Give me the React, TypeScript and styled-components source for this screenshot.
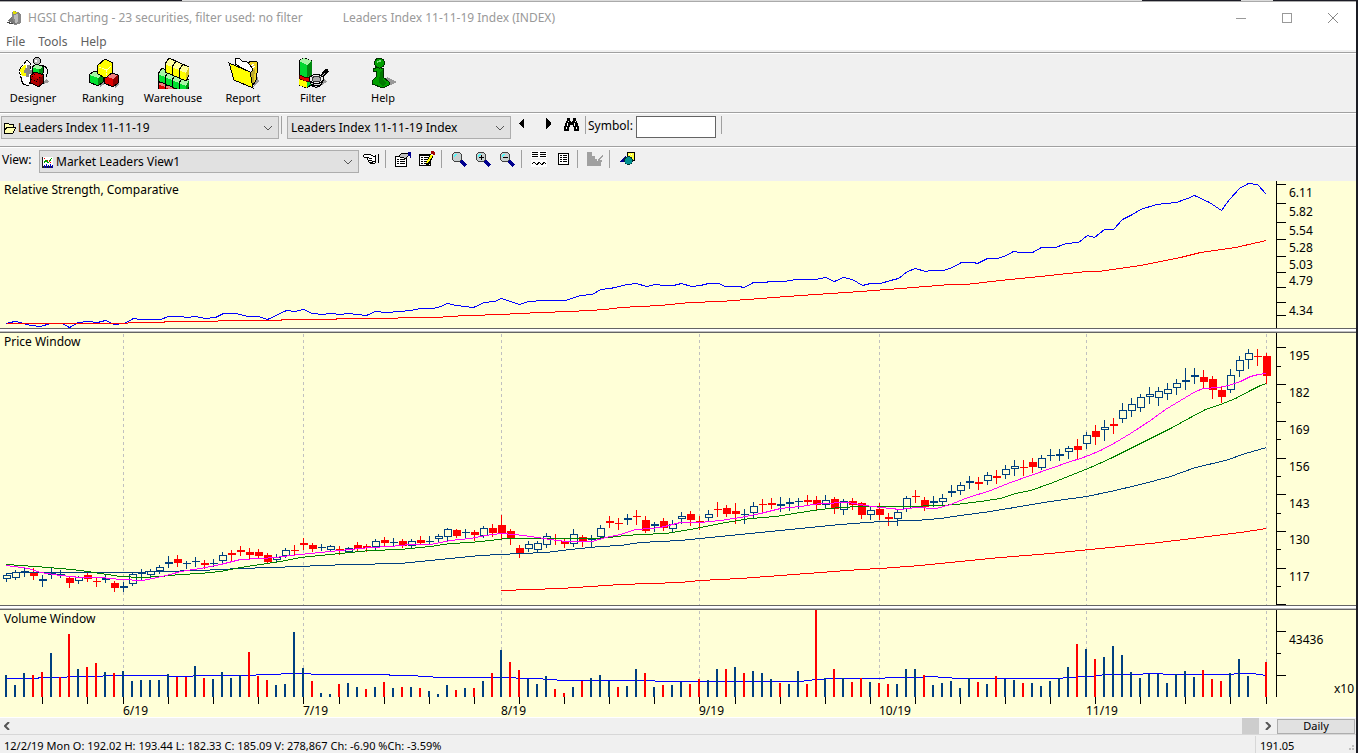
import React from 'react';
import styled, { createGlobalStyle } from 'styled-components';

const GlobalStyle = createGlobalStyle`
  * { box-sizing: border-box; }
  html, body, #root { height: 100%; }
  body { margin: 0; background: #1b1c24; font-family: 'Noto Sans', 'Open Sans', sans-serif; color: #000; }
  button, input, select { font: inherit; color: inherit; }
`;

/* ---------- data ---------- */

type Point = [number, number];

const STEP = 9;
const barX = (i: number) => 6 + i * STEP;

/* direction, high, body top, body bottom, low */
const CANDLES = `
b573,575,579,582 b570,572,578,580 b568,571,573,577 r568,572,576,580 b575,579,581,587 b568,573,575,579 b570,574,575,578
r577,578,583,588 b576,577,581,584 r573,575,579,582 r577,581,582,587 b575,578,580,583 r581,583,588,592 b582,586,588,592
b573,574,584,586 b569,572,574,580 b569,571,575,578 b565,567,571,574 b556,562,564,568 r555,559,563,567 b561,563,564,569
b557,561,562,567 r560,563,565,569 b559,563,564,567 b552,555,561,563 r550,553,555,561 r546,550,552,556 r548,552,555,560
r549,552,556,558 r553,555,562,563 b554,557,560,563 b548,550,556,558 r545,550,551,556 r538,543,545,550 r543,545,549,552
b544,547,548,551 b545,546,550,552 r546,549,550,555 b547,548,552,553 r542,545,549,551 r544,546,548,552 b539,541,547,550
r537,540,543,546 b538,542,543,547 r539,541,546,548 b539,541,546,549 r536,540,543,545 b536,541,542,545 b534,536,539,543
b528,529,537,541 r529,530,536,538 b529,532,533,538 r530,532,535,541 b526,528,536,538 r524,528,533,537 r515,525,534,539
r529,531,539,545 r545,548,553,558 b541,544,549,552 b541,543,550,553 b533,536,545,548 r534,538,539,545 r538,541,544,548
b529,534,544,547 r535,537,542,547 b535,539,540,547 b525,528,537,540 r516,521,523,528 r518,523,524,530 b514,518,520,525
r510,516,517,525 r516,520,531,533 b522,524,526,532 r518,521,528,531 b520,524,529,533 b512,516,519,524 r511,514,520,526
r516,521,522,530 b510,514,518,521 r502,509,510,517 r505,508,514,517 r503,511,514,524 b509,514,515,524 b502,506,513,519
r499,504,505,513 r498,503,505,509 b497,504,506,512 b498,502,504,511 b498,501,502,509 r495,500,502,506 r496,500,505,511
b495,500,505,508 r497,499,509,514 b499,501,510,515 r498,501,505,510 r502,503,515,519 b506,510,515,520 r503,509,515,520
r513,517,519,526 b510,512,519,526 b496,498,509,512 r490,496,497,503 r497,500,507,511 b496,501,503,507 b494,498,502,505
b485,491,493,497 b482,485,491,495 b476,481,483,489 r477,482,484,490 b472,475,481,485 r470,476,478,484 b465,469,475,479
b460,466,469,476 r460,467,468,476 r458,462,467,473 b455,458,468,470 b449,455,456,461 b449,454,456,461 b446,448,452,459
r439,446,450,459 b432,435,444,449 r425,431,437,445 b420,427,430,441 r418,424,426,434 b403,410,419,423 b398,404,411,417
b394,397,408,412 b387,394,397,404 b387,391,398,406 b383,389,394,400 b379,383,388,395 b368,380,382,390 b368,375,377,384
r370,377,382,389 r376,379,390,399 r387,390,397,403 b369,375,390,393 b356,360,371,377 b349,353,360,369 r349,356,357,366
r353,356,376,384`
  .trim()
  .split(/\s+/)
  .map((s) => ({ up: s[0] === 'b', v: s.slice(1).split(',').map(Number) }));

const VOLUMES = `
b675 b685 b673 r675 r672 b653 r677 r634 b669 r667 r663 b672 r673 b671 b681 b680 b680 b680 b674 r677 r677 b666 r678 b679
b672 b678 b675 r652 r676 r680 b685 b684 b632 b668 r681 b693 b694 r684 b683 b687 r689 b687 r682 b688 r687 b687 r688 b691
b694 b685 r690 b688 r688 b681 r673 b650 r662 r670 b679 b684 b676 r689 r693 b687 r681 b678 b675 b681 r687 b686 b669 r673
b687 r685 b685 b682 r684 r679 b680 b669 r669 b667 r673 b671 b673 b679 r683 b684 b671 r684 r610 b678 r669 b678 r682 r678
b682 r683 r684 b684 b669 b669 r675 b685 b683 b681 b688 b678 r682 b684 r676 b679 b680 r683 b683 b686 b681 b678 b667 r644
b649 r659 b657 b646 b655 b672 b678 b674 b674 b683 b674 b671 b677 r670 r679 r681 b673 b659 b676 b697 r662`
  .trim()
  .split(/\s+/)
  .map((s) => ({ up: s[0] === 'b', top: Number(s.slice(1)) }));

const series = (s: string): Point[] =>
  s.trim().split(/\s+/).map((p) => p.split(',').map(Number) as Point);

const RS_LINE = series(`6,323 14,321 20,322 30,325 40,326 50,323 62,323 69,327 78,322 88,321 97,322 105,320 114,324 124,323
133,318 140,319 160,319 168,316 180,316 187,317 195,316 205,318 215,317 223,313 235,313 248,316 258,316 267,319 286,310 294,311
303,309 312,313 322,314 330,313 340,314 348,313 366,315 375,311 385,312 400,311 410,310 420,308 433,308 440,306 447,303 456,305
473,307 484,302 494,301 501,298 519,304 528,301 543,300 565,300 580,295 592,294 600,289 610,288 627,284 636,283 646,286 655,284
664,285 673,285 681,283 691,286 700,285 708,283 718,283 725,286 738,286 744,287 753,282 766,282 768,281 784,281 795,279 815,279
825,277 834,281 843,277 852,279 862,285 870,283 880,283 890,280 898,278 907,271 915,268 925,271 930,270 943,270 952,267 961,262
973,262 977,263 987,258 997,258 1006,255 1013,251 1020,252 1032,252 1041,247 1055,247 1066,243 1078,242 1087,235 1094,237
1104,229 1113,229 1122,219 1132,214 1140,209 1156,204 1176,202 1187,198 1194,195 1209,202 1221,210 1229,199 1239,188 1248,183
1257,184 1266,194`);
const RS_AVG = series(`6,323 125,323 130,322 163,322 165,321 215,321 220,320 280,320 282,319 335,319 337,318 395,318 400,317
440,317 445,316 470,315 500,314 540,312 570,311 605,309 620,307 660,305 690,302 720,301 760,298 800,295 830,293 860,291 900,288
950,284 965,284 1000,280 1040,276 1086,271 1098,271 1140,265 1180,257 1200,252 1235,247 1266,240`);
const MA_FAST = series(`6,565 28,568 40,572 60,575 80,577 100,577 120,579 142,580 152,578 170,574 180,571 200,568 220,564
240,559 260,558 275,557 290,555 300,554 320,552 350,549 370,547 390,546 410,544 430,544 450,540 470,538 485,535 500,533 515,534
530,536 550,539 565,541 592,541 605,537 620,534 635,529 650,528 660,527 680,522 700,522 720,520 740,517 760,513 780,508 800,506
820,503 848,502 865,505 880,507 900,509 915,507 936,508 950,504 965,498 990,490 1010,482 1030,475 1050,468 1070,461 1080,458
1088,455 1100,450 1115,442 1130,433 1150,420 1165,409 1180,400 1195,391 1203,388 1218,387 1228,385 1240,381 1250,376 1258,374
1266,373`);
const MA_MID = series(`6,564 20,565 35,566 60,568 80,570 100,573 120,576 140,577 160,576 180,574 200,573 220,571 240,567 260,564
280,561 300,557 320,555 340,553 370,550 400,549 430,546 450,543 470,542 490,540 505,538 520,538 592,538 608,537 625,535 640,534
665,533 690,529 720,523 750,518 775,516 800,512 820,509 840,507 860,506 905,506 940,505 955,504 980,501 1000,498 1015,493
1030,490 1050,483 1075,473 1090,467 1110,458 1130,448 1150,438 1170,428 1190,417 1205,409 1220,404 1235,398 1250,390 1260,385
1266,383`);
const MA_SLOW = series(`6,573 20,572 130,572 160,571 200,570 240,568 270,567 300,566 320,565 350,564 400,563 430,560 460,557
480,555 500,554 520,553 545,552 570,549 600,546 620,545 640,542 680,540 700,538 720,536 760,532 800,528 840,524 880,521 915,520
940,518 960,515 990,511 1020,506 1050,501 1086,496 1110,491 1140,484 1170,476 1195,467 1225,460 1245,453 1266,447`);
const MA_LONG = series(`501,590 530,589 560,588 590,586 620,584 650,583 680,582 700,580 740,578 780,575 820,572 860,569 880,568
920,565 950,562 1000,557 1050,553 1100,548 1150,543 1200,537 1240,532 1266,528`);
const VOL_AVG = series(`6,678 36,678 40,677 65,677 68,676 100,676 105,675 165,675 172,676 190,676 195,675 250,675 262,674 300,673
320,674 388,674 390,675 415,675 420,676 445,677 510,677 520,678 540,678 545,679 568,680 640,680 668,681 800,681 815,679 832,678
880,678 890,677 920,677 930,676 945,677 958,678 1060,678 1065,677 1090,676 1105,674 1140,674 1145,673 1160,673 1165,674 1228,674
1240,673 1252,673 1266,675`);

const MONTHS = [
  { x: 123, label: '6/19' }, { x: 303, label: '7/19' }, { x: 501, label: '8/19' }, { x: 699, label: '9/19' },
  { x: 879, label: '10/19' }, { x: 1086, label: '11/19' }, { x: 1266, label: '' },
];
const WEEK_TICKS = [42, 87, 123, 168, 213, 258, 303, 339, 384, 429, 474, 519, 564, 609, 654, 699, 735, 780, 825, 870, 915, 960,
  1005, 1050, 1095, 1140, 1185, 1230, 1266];

const NAVY = '#004080';
const RED = '#ff0000';
const PLOT_W = 1276;

/* ---------- window frame ---------- */

const Window = styled.div`
  display: flex; flex-direction: column; min-height: 100vh; min-width: 900px;
  border-right: 2px solid #1b1c24; background: #f0f0f0;
`;
const Desktop = styled.div`
  flex: none; height: 2px; border-bottom: 1px solid #aaa;
  background: linear-gradient(90deg, #1c1c26 182px, #dcdcdc 182px, #dcdcdc calc(100% - 214px), #1c1c26 calc(100% - 214px),
    #1c1c26 calc(100% - 115px), #dcdcdc calc(100% - 115px), #dcdcdc calc(100% - 83px), #1c1c26 calc(100% - 83px));
`;
const TitleBar = styled.header`
  display: flex; align-items: center; height: 31px; padding: 0 15px 0 7px; background: #fff;
  font-size: 12px; color: #999; white-space: pre;
`;
const Title = styled.h1`
  margin: 0 40px 0 5px; font-size: 12px; font-weight: 400; line-height: 16px;
`;
const Spacer = styled.div`flex: 1;`;
const CaptionButton = styled.button`
  width: 16px; height: 16px; padding: 0; margin-left: 30px; border: 0; background: none; color: #999;
  svg { display: block; }
`;
const MenuBar = styled.nav`
  display: flex; gap: 13px; height: 19px; padding: 0 6px; background: #fff; border-bottom: 2px solid #f0f0f0;
  font-size: 12px; line-height: 17px;
`;
const MenuItem = styled.button`
  padding: 0; border: 0; background: none; color: #606060; font-size: 12px;
`;
const Bar = styled.div<{ $h: number }>`
  display: flex; height: ${(p) => p.$h}px; border-top: 1px solid #a0a0a0; box-shadow: inset 0 1px #fff;
  font-size: 12px;
`;
const MainBar = styled(Bar)`gap: 4px; padding-top: 4px;`;
const MainButton = styled.button`
  display: flex; flex-direction: column; align-items: center; width: 66px; padding: 0; border: 0; background: none;
  font-size: 11px; line-height: 16px;
  svg { display: block; flex: none; margin-bottom: 1px; }
`;
const ComboRow = styled(Bar)`align-items: flex-start; padding: 3px 0 0 1px;`;
const Combo = styled.label<{ $w: number; $pad?: number }>`
  display: flex; align-items: center; width: ${(p) => p.$w}px; height: 23px; padding: 0 5px 0 ${(p) => p.$pad ?? 0}px;
  border: 1px solid #adadad; background: #e1e1e1; color: #555;
`;
const ComboSelect = styled.select`
  flex: 1; min-width: 0; height: 21px; padding: 0; border: 0; outline: 0; background: transparent;
  appearance: none; color: #000; font-size: 12px;
`;
const Separator = styled.i<{ $before?: number; $after?: number }>`
  width: 1px; height: 18px; margin: 0 ${(p) => p.$after ?? 9}px 0 ${(p) => p.$before ?? 6}px; background: #a0a0a0;
`;
const ToolButton = styled.button<{ $before?: number; $gap?: number }>`
  width: 16px; height: 16px; margin: 1px ${(p) => p.$gap ?? 0}px 0 ${(p) => p.$before ?? 0}px; padding: 0; border: 0; background: none;
  svg { display: block; }
`;
const FieldLabel = styled.label`
  width: 48px; line-height: 20px; white-space: nowrap;
`;
const ViewLabel = styled(FieldLabel)`width: 38px; padding-left: 1px;`;
const SymbolInput = styled.input`
  width: 80px; height: 22px; padding: 2px 4px; border: 1px solid #646464; background: #fff; outline: 0;
`;

/* ---------- chart panels ---------- */

const Charts = styled.main`flex: 1; display: flex; flex-direction: column; background: #ffffd7;`;
const Panel = styled.section<{ $h: number }>`
  position: relative; display: flex; flex: ${(p) => p.$h} 0 ${(p) => p.$h}px; background: #ffffd7; font-size: 12px;
`;
const Divider = styled.div`
  flex: none; height: 5px; border-top: 1px solid #646464; border-bottom: 1px solid #646464;
  background: linear-gradient(#fff 2px, #c0c0c0 2px);
`;
const PanelTitle = styled.h2`
  position: absolute; left: 4px; top: 0; margin: 0; font-size: 12px; font-weight: 400; line-height: 18px;
`;
const Plot = styled.svg`
  flex: 1; min-width: 0; display: block; height: 100%;
`;
const Axis = styled.svg`
  flex: none; width: 80px; display: block; height: 100%; overflow: visible;
`;
const UnitLabel = styled.span`
  position: absolute; right: 2px; bottom: 7px; line-height: 16px;
`;
const DateRow = styled.div`
  position: relative; flex: none; height: 13px; margin-right: 80px; font-size: 12px; line-height: 14px;
`;
const DateLabel = styled.span`position: absolute; top: 0;`;

const ScrollRow = styled.div`
  display: flex; align-items: center; flex: none; height: 17px; padding-right: 1px; border-top: 1px solid #fff; background: #f0f0f0;
`;
const ScrollButton = styled.button<{ $w: number }>`
  width: ${(p) => p.$w}px; height: 16px; padding: 0; border: 0; background: none; color: #555;
  svg { display: block; margin: 0 auto; }
`;
const ScrollTrack = styled.div`flex: 1; display: flex; justify-content: flex-end; height: 16px;`;
const ScrollThumb = styled.div`width: 17px; background: #cdcdcd;`;
const PeriodButton = styled.button`
  width: 78px; height: 15px; padding: 0; margin-left: 1px; border: 1px solid #adadad; background: #e1e1e1;
  font-size: 11px; line-height: 12px;
`;
const StatusBar = styled.footer`
  display: flex; align-items: stretch; flex: none; height: 19px; border-top: 1px solid #d7d7d7; background: #f0f0f0;
  font-size: 11px; line-height: 15px;
`;
const StatusText = styled.div`flex: 1; padding: 3px 0 0 4px; white-space: nowrap;`;
const StatusValue = styled.div`
  width: 93px; margin-top: 1px; padding: 2px 0 0 4px; border-left: 1px solid #d7d7d7;
`;
const Grip = styled.svg`align-self: flex-end; width: 8px; height: 8px;`;

/* ---------- icons ---------- */

const Pix = ({ size = 16, children }: { size?: number; children: React.ReactNode }) => (
  <svg width={size} height={size} viewBox={`0 0 ${size} ${size}`} shapeRendering="crispEdges" aria-hidden="true">{children}</svg>
);

interface Shades { top: string; front: string; side: string }
const GREEN: Shades = { top: '#a6f5a6', front: '#00e030', side: '#008a10' };
const REDC: Shades = { top: '#f08080', front: '#e00000', side: '#900000' };
const YELLOW: Shades = { top: '#ffff9a', front: '#ffff00', side: '#d8c820' };

/* An isometric block: lit top, front face and shaded side. */
const Cube = ({ x, y, s = 1, top, front, side }: { x: number; y: number; s?: number } & Shades) => (
  <g transform={`translate(${x} ${y}) scale(${s})`} stroke="#000" strokeWidth={1 / s} strokeLinejoin="round">
    <path d="M0 4L5 0L14 3L14 11L9 15L0 11Z" fill={front} />
    <path d="M0 4L5 0L14 3L9 7Z" fill={top} stroke="none" />
    <path d="M9 7L14 3V11L9 15Z" fill={side} stroke="none" />
    <path d="M0 4L5 0L14 3L14 11L9 15L0 11Z" fill="none" />
  </g>
);

/* A run of joined blocks that recedes to the lower right. */
const BlockRow = ({ x, y, n, h, top, front, side }: { x: number; y: number; n: number; h: number } & Shades) => {
  const ex = x + n * 7;
  const ey = y + n * 3;
  return (
    <g>
      <path d={`M${x} ${y}L${x + 4} ${y - 6}L${ex + 3} ${ey - 6}V${ey - 6 + h}L${ex} ${ey + h}L${x} ${y + h}Z`} fill={front} stroke="#000" />
      <path d={`M${x} ${y}L${x + 4} ${y - 6}L${ex + 3} ${ey - 6}L${ex} ${ey}Z`} fill={top} />
      <path d={`M${ex} ${ey}L${ex + 3} ${ey - 6}V${ey - 6 + h}L${ex} ${ey + h}Z`} fill={side} />
      {Array.from({ length: n - 1 }, (_, i) => (
        <path key={i} d={`M${x + 4 + (i + 1) * 7} ${y - 6 + (i + 1) * 3}L${x + (i + 1) * 7} ${y + (i + 1) * 3}V${y + h + (i + 1) * 3}`}
          fill="none" stroke="#000" />
      ))}
      <path d={`M${x} ${y}L${x + 4} ${y - 6}L${ex + 3} ${ey - 6}V${ey - 6 + h}L${ex} ${ey + h}L${x} ${y + h}Z`} fill="none" stroke="#000" />
    </g>
  );
};

const DesignerIcon = () => (
  <Pix size={32}>
    <g transform="translate(1 0)">
      <path d="M20 29L31 25L29 22Z" fill="#999" />
      <path d="M23 9C29 8 31 13 28 20" fill="none" stroke="#000" />
      <Cube x={14} y={7} s={0.8} {...GREEN} />
      <circle cx="19" cy="4" r="3.5" fill="#b8b8b8" stroke="#000" />
      <path d="M17 3h2v2h-2z" fill="#fff" />
      <path d="M1 13L9 3L12 6L14 22L10 29L5 27L3 21Z" fill="#fff" stroke="#000" strokeDasharray="3 1" />
      <path d="M2 13L7 7L9 12L8 19L4 19Z" fill="#ffff00" />
      <path d="M7 11h2v-3h3v5h2v4h-3v3h-3v-4h-2z" fill="#888" />
      <path d="M4 20C2 25 5 28 11 29" fill="none" stroke="#000" />
      <Cube x={12} y={15} s={0.98} top="#d00000" front="#b00000" side="#800000" />
      <path d="M14 19L20 23M16 17L22 21M13 22L19 25" stroke="#000" strokeDasharray="1 2" />
    </g>
  </Pix>
);
const RankingIcon = () => (
  <Pix size={32}>
    <g transform="translate(1 0)">
      <path d="M12 30L18 26L14 24ZM27 31L31 27L29 25Z" fill="#999" />
      <Cube x={1} y={14} {...GREEN} />
      <Cube x={16} y={15} {...REDC} />
      <path d="M9 9L17 2L25 6L24 16L17 21L10 17Z" fill="#ffff00" stroke="#000" />
      <path d="M11 10L19 13L24 8M19 13L18 20" stroke="#ffffc0" strokeDasharray="2 1" fill="none" />
    </g>
  </Pix>
);
const WarehouseIcon = () => (
  <Pix size={32}>
    <BlockRow x={1} y={27} n={2} h={7} {...REDC} />
    <BlockRow x={1} y={17} n={4} h={7} {...GREEN} />
    <BlockRow x={8} y={7} n={3} h={8} {...YELLOW} />
  </Pix>
);
const ReportIcon = () => (
  <Pix size={32}>
    <g transform="translate(1 0)">
      <path d="M25 31L31 24L29 19Z" fill="#999" />
      <path d="M20 6L23 4L29 5L30 9L28 23L24 30L17 10Z" fill="#f0d820" stroke="#000" />
      <path d="M7 7L8 1L12 2L14 4L18 4L22 8L25 12L23 16Z" fill="#fff" stroke="#000" />
      <path d="M1 6L22 15L25 31L6 23Z" fill="#ffff00" stroke="#000" />
      <path d="M23 15L27 11L26 24L25 29Z" fill="#b8a830" />
      <path d="M23 12L27 9M23 9L26 7" stroke="#fff" />
    </g>
  </Pix>
);
const FilterIcon = () => (
  <Pix size={32}>
    <path d="M20 31L30 25L26 20Z" fill="#999" />
    <path d="M2 4L7 1L15 4L14 28L10 31L2 28Z" fill="#00d830" stroke="#000" />
    <path d="M2 4L7 1L15 4L10 8Z" fill="#a6f5a6" />
    <path d="M10 8L15 4V18L10 20Z" fill="#008a10" />
    <path d="M2 18L10 21L15 19V23L10 25L2 22Z" fill="#e00000" stroke="#400" />
    <path d="M2 22L10 25V31L2 28Z" fill="#ffff00" />
    <path d="M24 20L27 17" stroke="#000" strokeWidth="3" />
    <path d="M26 17L31 13" stroke="#000" strokeWidth="4" />
    <path d="M24 20L28 16" stroke="#bbb" />
    <path d="M13 23C14 33 24 32 26 23" fill="#ddd" stroke="#000" />
    <ellipse cx="19.500" cy="22" rx="7" ry="4.500" fill="#eee" stroke="#000" />
    <ellipse cx="19.500" cy="22" rx="4.500" ry="2.500" fill="#aaa" stroke="#333" />
    <path d="M15 27C18 30 23 29 25 26" fill="none" stroke="#000" />
  </Pix>
);
const HelpIcon = () => (
  <Pix size={32}>
    <path d="M17 31L30 25L20 20L18 26Z" fill="#999" />
    <path d="M6 12L11 10L17 12L16 20L22 25V28L16 31L5 27V24L9 20V14H6Z" fill="#00a000" stroke="#003000" />
    <path d="M13 15L16 13V23L20 26L16 29L12 26Z" fill="#007800" />
    <circle cx="12.500" cy="6" r="5" fill="#00a000" stroke="#003000" />
    <path d="M10 4h2v-1h2v2h-3v1h-1z" fill="#80e080" />
  </Pix>
);
const AppIcon = () => (
  <Pix>
    <path d="M5 3L6 1L11 2L14 5V13L8 15L5 13Z" fill="#888" />
    <path d="M6 1L10 2L9 4L6 4Z" fill="#e0e000" />
    <path d="M7 5L11 4V12L8 13Z" fill="#bbb" />
    <path d="M2 9L5 7L6 11L9 13L8 14L1 11Z" fill="#777" />
    <path d="M0 12h3v1h3v1H2v-1H0z" fill="#444" />
  </Pix>
);
const Chevron = () => (
  <svg width="10" height="6" viewBox="0 0 10 6" aria-hidden="true"><path d="M1 1L5 5L9 1" fill="none" stroke="currentColor" /></svg>
);
const FolderIcon = () => (
  <Pix>
    <path d="M2 12V4L3 3H6L7 4H11V7H14L11 13H2Z" fill="#ffffb0" stroke="#000" />
    <path d="M2 12L5 7H14" fill="none" stroke="#000" />
  </Pix>
);
const ChartIcon = () => (
  <Pix>
    <rect x="2" y="3" width="11" height="11" fill="#fff" />
    <path d="M2 3h1v11H2zM3 12h10v2H3z" fill="#202020" />
    <path d="M4 9L6 6L8 9L12 4" stroke="#00a000" fill="none" />
    <path d="M4 4L8 7L12 9" stroke="#f00" fill="none" strokeDasharray="2 1" />
    <path d="M4 11h1v3H4zM6 10h1v4H6zM8 11h1v3H8zM10 10h1v4h-1zM12 11h1v3h-1z" fill="#0000c0" />
  </Pix>
);
const HandIcon = () => (
  <Pix>
    <path d="M1 4H8L10 3L13 5V11L10 12H7L6 10H4L3 8H5V6H1Z" fill="#fff" />
    <path d="M1 3h7v1H1zM0 4h1v2H0zM1 6h5v1H1zM4 7h1v2H4zM5 9h4v1H5zM5 10h1v1H5zM6 11h4v1H6zM8 4h2v1H8zM10 5h2v1h-2zM6 7h3v1H6zM9 10h3v1H9z" />
    <path d="M12 4h1v8h-1zM15 3h1v9h-1zM7 12h5v1H7z" />
  </Pix>
);
const PropsIcon = () => (
  <Pix>
    <path d="M0 5H12V16H0Z" />
    <path d="M1 6H11V15H1Z" fill="#fff" />
    <path d="M2 8h2v1H2zM5 8h5v1H5zM2 10h2v1H2zM5 10h5v1H5zM2 12h2v1H2zM5 12h5v1H5z" />
    <path d="M4 5L7 2H12L14 4L10 8L8 6H5Z" fill="#c0c0c0" stroke="#000" />
    <path d="M13 1h3v6h-1v-2h-2z" fill="#000090" />
  </Pix>
);
const EditIcon = () => (
  <Pix>
    <path d="M0 3H12V15H0Z" />
    <path d="M1 5H11V14H1Z" fill="#fff" />
    <path d="M2 6h2v1H2zM5 6h4v1H5zM2 8h2v1H2zM5 8h4v1H5zM2 10h2v1H2zM5 10h4v1H5zM2 12h2v1H2zM5 12h4v1H5z" />
    <path d="M8 13L13 4" stroke="#000" strokeWidth="4" />
    <path d="M8 12L13 4" stroke="#ffff00" strokeWidth="2" />
    <path d="M12 0h3v1h1v3h-2v-1h-2z" fill="#a00000" />
    <path d="M7 12h2v2H7z" />
  </Pix>
);
const ZoomIcon = ({ sign }: { sign?: '+' | '-' }) => (
  <Pix>
    <path d="M10 10L15 15" stroke="#000090" strokeWidth="3" />
    <circle cx="6" cy="6" r="5" fill="#c8d0d0" stroke="#404040" />
    <path d="M3 4h1v-1h2v1h-1v1h-1v1h-1z" fill="#40ffff" />
    {sign && <path d="M4 6h5v1H4z" />}
    {sign === '+' && <path d="M6 4h1v5H6z" />}
  </Pix>
);
const WavesIcon = () => (
  <Pix>
    <rect width="16" height="16" fill="#fff" />
    <path d="M1 1h6v1H1zM9 1h6v1H9zM1 3h6v1H1zM9 3h6v1H9zM1 5h6v1H1zM9 5h6v1H9z" />
    <rect y="7" width="16" height="2" fill="#f0f0f0" />
    <path d="M1 13L3 11L6 14L8 11L11 14L13 11L15 13" fill="none" stroke="#000" />
  </Pix>
);
const ListIcon = () => (
  <Pix>
    <rect x="3.500" y="2.500" width="10" height="11" fill="#fff" stroke="#000" />
    <path d="M5 4h2v1H5zM8 4h4v1H8zM5 6h2v1H5zM8 6h4v1H8zM5 8h2v1H5zM8 8h4v1H8zM5 10h2v1H5zM8 10h4v1H8z" />
  </Pix>
);
const StepIcon = () => (
  <Pix><path d="M0 1h5v4h3v3h2v2h1v-2h1v-1h1v-1h1v-1h1v-1h1v2h-1v1h-1v1h-1v1h2v2h-1v4H0z" fill="#a0a0a0" /></Pix>
);
const ShapesIcon = () => (
  <Pix>
    <path d="M8 1H15V9H8Z" fill="#ffff40" stroke="#000" />
    <path d="M0 11L7 4V11Z" fill="#000090" />
    <circle cx="9.500" cy="9.500" r="4" fill="#009090" stroke="#003030" />
    <path d="M10 3h1v1h-1zM12 3h1v1h-1z" fill="#fff" />
  </Pix>
);
const BinocularsIcon = () => (
  <Pix>
    <path d="M4 1h3v3h1v1h1v-1h1v-3h3v3h1v2h1v3h1v5h-5v-4h-1v-2h-3v2h-1v4H1v-5h1v-3h1v-2h1z" />
    <path d="M5 4h1v1H5zM4 6h1v3H4zM12 4h1v1h-1zM11 6h1v3h-1zM3 10h1v2H3zM13 10h1v2h-1z" fill="#fff" />
  </Pix>
);
const ArrowIcon = ({ right }: { right?: boolean }) => (
  <Pix><path d={right ? 'M7 1V12L12 7V6Z' : 'M13 1V12L8 7V6Z'} /></Pix>
);

/* ---------- chart parts ---------- */

const Line = ({ points, color }: { points: Point[]; color: string }) => (
  <polyline points={points.map(([x, y]) => `${x + 0.5},${y + 0.5}`).join(' ')} fill="none" stroke={color} />
);
const MonthLines = ({ top, bottom }: { top: number; bottom: number }) => (
  <g stroke="#c0c0c0" strokeDasharray="3 3">
    {MONTHS.map((m) => <path key={m.x} d={`M${m.x + 0.5} ${top}V${bottom}`} />)}
  </g>
);
const PlotArea = ({ top, height, label, children }: { top: number; height: number; label: string; children: React.ReactNode }) => (
  <Plot viewBox={`0 ${top} ${PLOT_W} ${height}`} preserveAspectRatio="none" shapeRendering="crispEdges" role="img" aria-label={label}>
    {children}
  </Plot>
);
interface AxisProps { top: number; height: number; end?: number; major: number[]; minor?: number[]; labels: [number, string][] }
const ValueAxis = ({ top, height, end, major, minor = [], labels }: AxisProps) => (
  <Axis viewBox={`0 ${top} 80 ${height}`} shapeRendering="crispEdges" fontSize="12">
    <rect x="0" y={top} width="1" height={(end ?? top + height) - top} />
    {major.map((y) => <rect key={y} x="1" y={y} width="9" height="1" />)}
    {minor.map((y) => <rect key={y} x="1" y={y} width="4" height="1" />)}
    {labels.map(([y, t]) => <text key={t} x="13" y={y + 5}>{t}</text>)}
  </Axis>
);

export default function App() {
  return (
    <>
      <GlobalStyle />
      <Window>
        <Desktop />
        <TitleBar>
          <AppIcon />
          <Title>HGSI Charting - 23 securities, filter used: no filter</Title>
          <span>Leaders Index 11-11-19 Index (INDEX)</span>
          <Spacer />
          <CaptionButton aria-label="Minimize"><Pix><path d="M3 8h10v1H3z" fill="#999" /></Pix></CaptionButton>
          <CaptionButton aria-label="Maximize"><Pix><path d="M3.500 3.500h9v9h-9z" fill="none" stroke="#999" /></Pix></CaptionButton>
          <CaptionButton aria-label="Close">
            <svg width="16" height="16" viewBox="0 0 16 16"><path d="M3 3L13 13M13 3L3 13" stroke="#888" /></svg>
          </CaptionButton>
        </TitleBar>
        <MenuBar>
          <MenuItem>File</MenuItem><MenuItem>Tools</MenuItem><MenuItem>Help</MenuItem>
        </MenuBar>

        <MainBar $h={60}>
          <MainButton><DesignerIcon />Designer</MainButton>
          <MainButton><RankingIcon />Ranking</MainButton>
          <MainButton><WarehouseIcon />Warehouse</MainButton>
          <MainButton><ReportIcon />Report</MainButton>
          <MainButton><FilterIcon />Filter</MainButton>
          <MainButton><HelpIcon />Help</MainButton>
        </MainBar>

        <ComboRow $h={34}>
          <Combo $w={278}>
            <FolderIcon />
            <ComboSelect aria-label="Group"><option>Leaders Index 11-11-19</option></ComboSelect>
            <Chevron />
          </Combo>
          <Separator $before={2} $after={5} />
          <Combo $w={224} $pad={3}>
            <ComboSelect aria-label="Security"><option>Leaders Index 11-11-19 Index</option></ComboSelect>
            <Chevron />
          </Combo>
          <ToolButton $gap={12} aria-label="Previous"><ArrowIcon /></ToolButton>
          <ToolButton $gap={8} aria-label="Next"><ArrowIcon right /></ToolButton>
          <ToolButton aria-label="Find"><BinocularsIcon /></ToolButton>
          <Separator $after={2} />
          <FieldLabel htmlFor="symbol">Symbol:</FieldLabel>
          <SymbolInput id="symbol" />
          <Separator $before={5} />
        </ComboRow>

        <ComboRow $h={35}>
          <ViewLabel htmlFor="view">View:</ViewLabel>
          <Combo $w={320}>
            <ChartIcon />
            <ComboSelect id="view"><option>Market Leaders View1</option></ComboSelect>
            <Chevron />
          </Combo>
          <ToolButton $before={4} aria-label="Point"><HandIcon /></ToolButton>
          <Separator />
          <ToolButton $gap={8} aria-label="Properties"><PropsIcon /></ToolButton>
          <ToolButton aria-label="Edit"><EditIcon /></ToolButton>
          <Separator />
          <ToolButton $gap={8} aria-label="Zoom"><ZoomIcon /></ToolButton>
          <ToolButton $gap={8} aria-label="Zoom in"><ZoomIcon sign="+" /></ToolButton>
          <ToolButton aria-label="Zoom out"><ZoomIcon sign="-" /></ToolButton>
          <Separator />
          <ToolButton $gap={8} aria-label="Split"><WavesIcon /></ToolButton>
          <ToolButton aria-label="List"><ListIcon /></ToolButton>
          <Separator />
          <ToolButton aria-label="Step"><StepIcon /></ToolButton>
          <Separator />
          <ToolButton aria-label="Shapes"><ShapesIcon /></ToolButton>
        </ComboRow>

        <Charts>
          <Panel $h={147}>
            <PanelTitle>Relative Strength, Comparative</PanelTitle>
            <PlotArea top={181} height={147} label="Relative strength">
              <Line points={RS_LINE} color="#0000ff" />
              <Line points={RS_AVG} color={RED} />
            </PlotArea>
            <ValueAxis top={181} height={147} major={[184, 203, 222, 239, 256, 272, 287, 302, 315]}
              labels={[[192, '6.11'], [211, '5.82'], [230, '5.54'], [247, '5.28'], [264, '5.03'], [280, '4.79'], [310, '4.34']]} />
          </Panel>
          <Divider />
          <Panel $h={272}>
            <PanelTitle>Price Window</PanelTitle>
            <PlotArea top={333} height={272} label="Price candles">
              <MonthLines top={334} bottom={605} />
              {CANDLES.map(({ up, v: [hi, top, bot, lo] }, i) => {
                const x = barX(i);
                const c = up ? NAVY : RED;
                const hollow = up && bot - top > 2;
                return (
                  <g key={i} fill={c}>
                    <rect x={x} y={hi} width="1" height={lo - hi} />
                    <rect x={x - 3} y={top} width="8" height={bot - top} />
                    {hollow && <rect x={x - 2} y={top + 1} width="6" height={bot - top - 2} fill="#ffffd7" />}
                  </g>
                );
              })}
              <Line points={MA_LONG} color={RED} />
              <Line points={MA_SLOW} color={NAVY} />
              <Line points={MA_MID} color="#008000" />
              <Line points={MA_FAST} color="#ff00ff" />
            </PlotArea>
            <ValueAxis top={333} height={272} major={[347, 384, 421, 458, 494, 531, 568, 604]}
              minor={[366, 402, 439, 476, 513, 549, 586]}
              labels={[[355, '195'], [392, '182'], [429, '169'], [466, '156'], [503, '143'], [539, '130'], [576, '117']]} />
          </Panel>
          <Divider />
          <Panel $h={94}>
            <PanelTitle>Volume Window</PanelTitle>
            <PlotArea top={610} height={94} label="Volume">
              <MonthLines top={611} bottom={697} />
              <Line points={VOL_AVG} color="#0000ff" />
              {VOLUMES.map((b, i) => (
                <rect key={i} x={barX(i) - 1} y={b.top} width="2" height={697 - b.top} fill={b.up ? NAVY : RED} />
              ))}
              {WEEK_TICKS.map((x) => <rect key={x} x={x} y="697" width="1" height="7" />)}
            </PlotArea>
            <ValueAxis top={610} height={94} end={697} major={[631, 675]} minor={[653]}
              labels={[[639, '43436']]} />
            <UnitLabel>x10</UnitLabel>
          </Panel>
          <DateRow>
            {MONTHS.map((m) => <DateLabel key={m.x} style={{ left: `${(m.x / PLOT_W) * 100}%` }}>{m.label}</DateLabel>)}
          </DateRow>
        </Charts>

        <ScrollRow>
          <ScrollButton $w={14} aria-label="Scroll left">
            <svg width="6" height="8" viewBox="0 0 6 8"><path d="M5 0L1 4L5 8" fill="none" stroke="currentColor" strokeWidth="2" /></svg>
          </ScrollButton>
          <ScrollTrack><ScrollThumb /></ScrollTrack>
          <ScrollButton $w={17} aria-label="Scroll right">
            <svg width="6" height="8" viewBox="0 0 6 8"><path d="M1 0L5 4L1 8" fill="none" stroke="currentColor" strokeWidth="2" /></svg>
          </ScrollButton>
          <PeriodButton>Daily</PeriodButton>
        </ScrollRow>
        <StatusBar>
          <StatusText>12/2/19 Mon O: 192.02 H: 193.44 L: 182.33 C: 185.09 V: 278,867 Ch: -6.90 %Ch: -3.59%</StatusText>
          <StatusValue>191.05</StatusValue>
          <Grip viewBox="0 0 8 8"><path d="M4 0h2v2H4zM4 3h2v2H4zM1 3h2v2H1z" fill="#bfbfbf" /></Grip>
        </StatusBar>
      </Window>
    </>
  );
}
